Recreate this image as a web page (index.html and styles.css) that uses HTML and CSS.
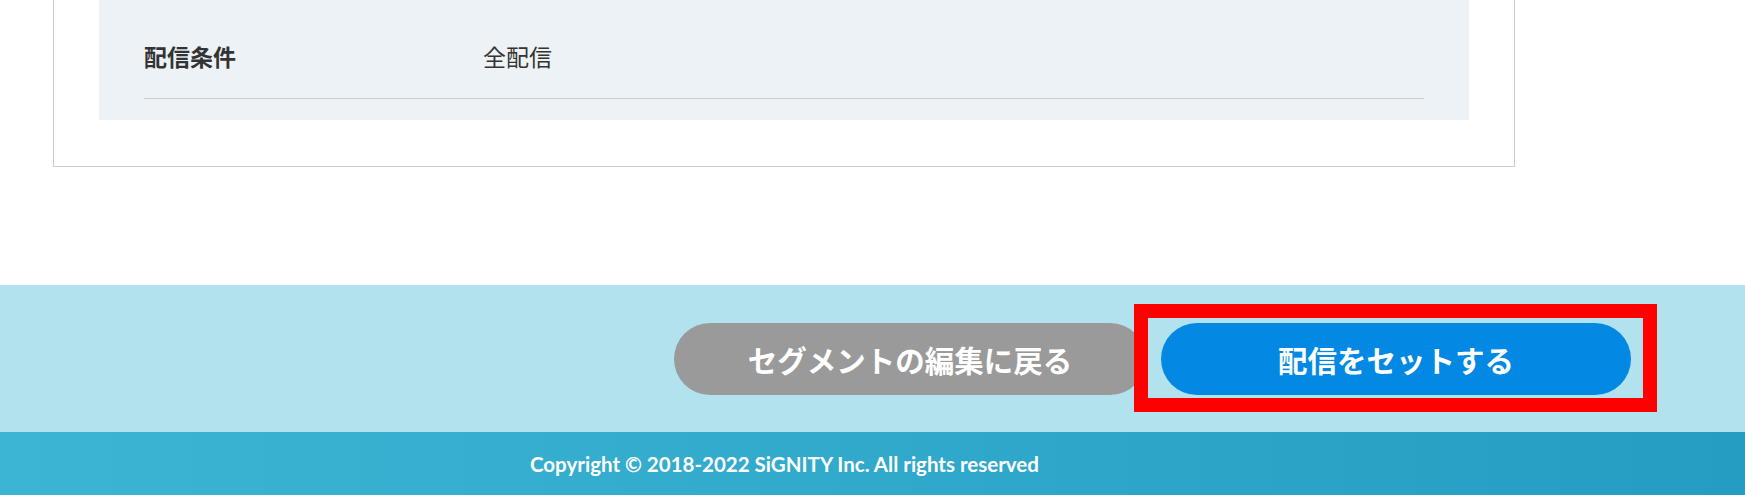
FILE: index.html
```html
<!DOCTYPE html>
<html lang="ja">
<head>
  <meta charset="UTF-8" />
  <title>配信設定の確認</title>
  <link rel="stylesheet" href="styles.css">
</head>
<body>
  <main class="content">
    <div class="card">
      <div class="panel">
        <div class="row">
          <span class="row-label">配信条件</span>
          <span class="row-value">全配信</span>
        </div>
      </div>
    </div>
  </main>

  <div class="actions">
    <button class="btn btn-back" type="button">セグメントの編集に戻る</button>
    <div class="highlight">
      <button class="btn btn-submit" type="button">配信をセットする</button>
    </div>
  </div>

  <footer class="footer">
    <p>Copyright © 2018-2022 SiGNITY Inc. All rights reserved</p>
  </footer>
</body>
</html>
```

FILE: styles.css
```css
body {
  font-family: "Noto Sans CJK JP", "Noto Sans", sans-serif;
  background: #ffffff;
  color: #333333;
  margin: 0;
}

.content {
  padding: 0 230px 118px 53px;
}

.card {
  background: white;
  border: 1px solid #cccccc;
  border-top: none;
  padding: 0 45px 46px;
}

.panel {
  background: #edf2f6;
  padding: 0 45px 21px;
}

.row {
  display: flex;
  align-items: center;
  padding: 41px 0 26px;
  border-bottom: 1px solid #cccccc;
  font-size: 23px;
  line-height: 31px;
}

.row-label {
  width: 339px;
  font-weight: 700;
}

.row-value {
  font-weight: 400;
}

.actions {
  background: #b1e2ed;
  height: 147px;
  display: flex;
  align-items: center;
  justify-content: flex-end;
  gap: 15px;
  padding-right: 114px;
}

.btn {
  height: 72px;
  border: none;
  border-radius: 36px;
  color: white;
  font-family: "Noto Sans CJK JP", "Noto Sans", sans-serif;
  font-size: 29.5px;
  font-weight: 700;
  cursor: pointer;
}

.btn-back {
  width: 472px;
  background: #9a9a9a;
}

.btn-submit {
  width: 470px;
  background: #0389e4;
  display: block;
}

.highlight {
  position: relative;
}

.highlight::after {
  content: "";
  position: absolute;
  top: -19px;
  bottom: -17px;
  left: -27px;
  right: -26px;
  border: 14px solid #ff0000;
  pointer-events: none;
}

.footer {
  height: 63px;
  background: linear-gradient(to right, #3cb5d4, #259dc3);
  display: flex;
  align-items: center;
  padding-left: 530px;
}

.footer p {
  margin: 0;
  font-family: Lato, "Noto Sans", sans-serif;
  font-size: 20.5px;
  font-weight: 700;
  color: white;
}
```
